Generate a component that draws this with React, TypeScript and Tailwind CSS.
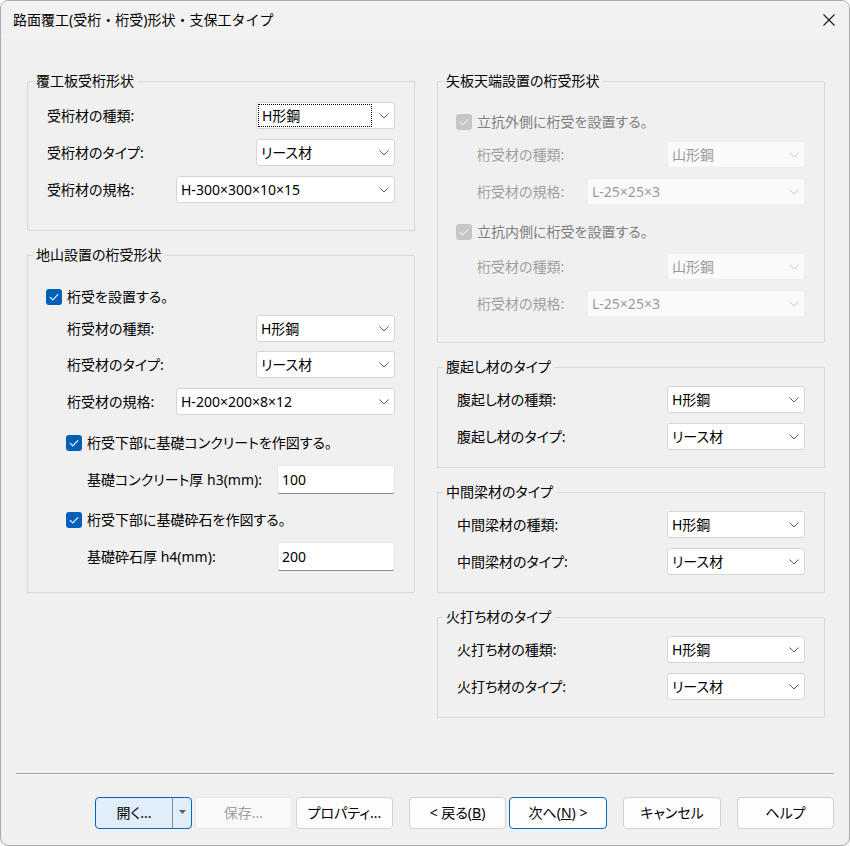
import clsx from "clsx"
import type { ReactNode } from "react"

const font = "font-['Noto_Sans','Noto_Sans_CJK_JP',sans-serif] [font-feature-settings:'palt']"

function Chevron({ disabled }: { disabled?: boolean }) {
  return (
    <svg width="10" height="6" viewBox="0 0 10 6" className="shrink-0">
      <path d="M0.5 0.5 L5 5 L9.5 0.5" fill="none" stroke={disabled ? "#c8c8c8" : "#5c5c5c"} strokeWidth="1" />
    </svg>
  )
}

function Combo({
  value,
  width,
  disabled,
  focused,
}: {
  value: string
  width: string
  disabled?: boolean
  focused?: boolean
}) {
  return (
    <div
      className={clsx(
        "flex h-[27px] shrink-0 items-center justify-between rounded-[3px] border pr-[5px]",
        focused ? "pl-[1px]" : "pl-[4px]",
        disabled ? "border-[#efefef] bg-[#fafafa] text-[#9a9a9a]" : "border-[#d6d6d6] bg-white text-black",
        width,
      )}
    >
      {focused ? (
        <span className="flex h-[23px] w-[114px] items-center border border-dotted border-black pl-[3px]">{value}</span>
      ) : (
        <span>{value}</span>
      )}
      <Chevron disabled={disabled} />
    </div>
  )
}

function Check({ disabled }: { disabled?: boolean }) {
  return (
    <span
      className={clsx(
        "flex h-4 w-4 shrink-0 items-center justify-center rounded-[3px]",
        disabled ? "bg-[#c6c6c6]" : "bg-[#005fb8]",
      )}
    >
      <svg width="16" height="16" viewBox="0 0 16 16">
        <path
          d="M4.2 8.3 L6.8 10.8 L11.8 5.6"
          fill="none"
          stroke={disabled ? "#ececec" : "#ffffff"}
          strokeWidth="1.1"
          strokeLinecap="round"
          strokeLinejoin="round"
        />
      </svg>
    </span>
  )
}

function CheckRow({ label, disabled, className }: { label: string; disabled?: boolean; className?: string }) {
  return (
    <div className={clsx("flex h-5 items-center gap-[5px]", disabled ? "text-[#7e7e7e]" : "text-black", className)}>
      <Check disabled={disabled} />
      <span>{label}</span>
    </div>
  )
}

function Field({
  label,
  children,
  className,
  disabled,
}: {
  label: string
  children: ReactNode
  className?: string
  disabled?: boolean
}) {
  return (
    <div className={clsx("flex items-center justify-between", disabled ? "text-[#a0a0a0]" : "text-black", className)}>
      <span>{label}</span>
      {children}
    </div>
  )
}

function NumBox({ value }: { value: string }) {
  return (
    <input
      readOnly
      value={value}
      className="h-[29px] w-[118px] rounded-[3px] border border-[#e6e6e6] border-b-[#8c8c8c] bg-white pl-[4px] text-[14px] text-black outline-none"
    />
  )
}

function Group({ title, children, className }: { title: string; children: ReactNode; className?: string }) {
  return (
    <fieldset className={clsx("w-[388px] border border-[#dadada]", className)}>
      <legend className="ml-[5px] px-[3px] leading-[20px] text-black">{title}</legend>
      {children}
    </fieldset>
  )
}

function Btn({
  children,
  variant = "normal",
  className,
}: {
  children: ReactNode
  variant?: "normal" | "default" | "disabled"
  className?: string
}) {
  return (
    <button
      type="button"
      className={clsx(
        "flex h-[32px] w-[97px] shrink-0 items-center justify-center rounded-[4px] border text-[14px]",
        variant === "normal" && "border-[#d2d2d2] bg-[#fdfdfd] text-black",
        variant === "default" && "border-[#0067c0] bg-[#fdfdfd] text-black",
        variant === "disabled" && "border-[#ebebeb] bg-[#f9f9f9] text-[#a0a0a0]",
        className,
      )}
    >
      {children}
    </button>
  )
}

export default function App() {
  return (
    <div className="bg-white">
      <div className={clsx("flex h-[846px] w-[850px] flex-col overflow-hidden rounded-[8px] border border-[#ababab] bg-[#f0f0f0] text-[14px] leading-[20px]", font)}>
        {/* title bar */}
        <div className="flex h-[37px] shrink-0 items-center justify-between bg-[#f3f2f2] pl-[12px] pr-[14px]">
          <span className="text-black [font-feature-settings:normal]">路面覆工(受桁・桁受)形状・支保工タイプ</span>
          <svg width="12" height="12" viewBox="0 0 12 12">
            <path d="M0.5 0.5 L11.5 11.5 M11.5 0.5 L0.5 11.5" stroke="#1a1a1a" strokeWidth="1.1" />
          </svg>
        </div>

        <div className="flex gap-[22px] pl-[26px] pt-[33px]">
          {/* left column */}
          <div className="flex flex-col gap-[14px]">
            <Group title="覆工板受桁形状">
              <div className="flex flex-col gap-[10px] px-[19px] pb-[27px] pt-[11px]">
                <Field label="受桁材の種類:">
                  <Combo value="H形鋼" width="w-[139px]" focused />
                </Field>
                <Field label="受桁材のタイプ:">
                  <Combo value="リース材" width="w-[139px]" />
                </Field>
                <Field label="受桁材の規格:">
                  <Combo value="H-300×300×10×15" width="w-[219px]" />
                </Field>
              </div>
            </Group>

            <Group title="地山設置の桁受形状">
              <div className="flex flex-col pb-[21px] pl-[18px] pr-[19px]">
                <CheckRow label="桁受を設置する。" className="mt-[22px]" />
                <Field label="桁受材の種類:" className="mt-[8px] pl-[21px]">
                  <Combo value="H形鋼" width="w-[139px]" />
                </Field>
                <Field label="桁受材のタイプ:" className="mt-[9px] pl-[21px]">
                  <Combo value="リース材" width="w-[139px]" />
                </Field>
                <Field label="桁受材の規格:" className="mt-[10px] pl-[21px]">
                  <Combo value="H-200×200×8×12" width="w-[219px]" />
                </Field>
                <CheckRow label="桁受下部に基礎コンクリートを作図する。" className="mt-[18px] pl-[20px]" />
                <Field label="基礎コンクリート厚 h3(mm):" className="mt-[12px] pl-[41px]">
                  <NumBox value="100" />
                </Field>
                <CheckRow label="桁受下部に基礎砕石を作図する。" className="mt-[16px] pl-[20px]" />
                <Field label="基礎砕石厚 h4(mm):" className="mt-[12px] pl-[41px]">
                  <NumBox value="200" />
                </Field>
              </div>
            </Group>
          </div>

          {/* right column */}
          <div className="flex flex-col gap-[14px]">
            <Group title="矢板天端設置の桁受形状">
              <div className="flex flex-col pb-[25px] pl-[18px] pr-[19px]">
                <CheckRow label="立抗外側に桁受を設置する。" disabled className="mt-[21px]" />
                <Field label="桁受材の種類:" disabled className="mt-[9px] pl-[21px]">
                  <Combo value="山形鋼" width="w-[138px]" disabled />
                </Field>
                <Field label="桁受材の規格:" disabled className="mt-[10px] pl-[21px]">
                  <Combo value="L-25×25×3" width="w-[218px]" disabled />
                </Field>
                <CheckRow label="立抗内側に桁受を設置する。" disabled className="mt-[17px]" />
                <Field label="桁受材の種類:" disabled className="mt-[11px] pl-[21px]">
                  <Combo value="山形鋼" width="w-[138px]" disabled />
                </Field>
                <Field label="桁受材の規格:" disabled className="mt-[10px] pl-[21px]">
                  <Combo value="L-25×25×3" width="w-[218px]" disabled />
                </Field>
              </div>
            </Group>

            {[
              ["腹起し材のタイプ", "腹起し材"],
              ["中間梁材のタイプ", "中間梁材"],
              ["火打ち材のタイプ", "火打ち材"],
            ].map(([title, part]) => (
              <Group key={title} title={title}>
                <div className="flex flex-col gap-[10px] pb-[17px] pl-[19px] pr-[19px] pt-[9px]">
                  <Field label={`${part}の種類:`}>
                    <Combo value="H形鋼" width="w-[138px]" />
                  </Field>
                  <Field label={`${part}のタイプ:`}>
                    <Combo value="リース材" width="w-[138px]" />
                  </Field>
                </div>
              </Group>
            ))}
          </div>
        </div>

        {/* etched separator */}
        <div className="mx-[15px] mt-[55px] h-[2px] border-b border-t border-b-white border-t-[#a0a0a0]" />

        <div className="mt-[22px] flex pl-[94px]">
          <div className="flex h-[32px] w-[97px] shrink-0 items-center rounded-[4px] border border-[#0067c0] bg-[#e0eef9] text-black">
            <span className="flex h-full w-[76px] items-center justify-center">開く...</span>
            <span className="h-full w-px bg-[#8d8d8d]" />
            <span className="flex h-full flex-1 items-center justify-center pb-[2px]">
              <svg width="7" height="4" viewBox="0 0 7 4">
                <path d="M0 0 L7 0 L3.5 4 Z" fill="#5f5f5f" />
              </svg>
            </span>
          </div>
          <Btn variant="disabled" className="ml-[3px] w-[96px]">保存...</Btn>
          <Btn className="ml-[4px] w-[96px]">プロパティ...</Btn>
          <Btn className="ml-[16px]">
            &lt; 戻る(<u>B</u>)
          </Btn>
          <Btn variant="default" className="ml-[3px] w-[98px]">
            次へ(<u>N</u>) &gt;
          </Btn>
          <Btn className="ml-[16px] w-[98px]">キャンセル</Btn>
          <Btn className="ml-[16px]">ヘルプ</Btn>
        </div>
      </div>
    </div>
  )
}
